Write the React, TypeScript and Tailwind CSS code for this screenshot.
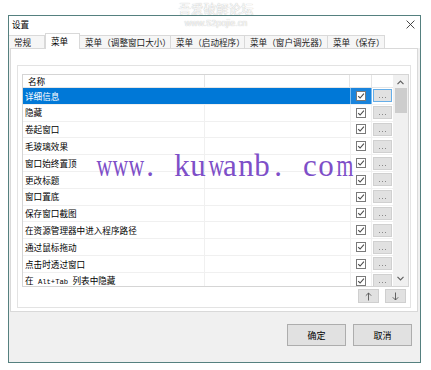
import React from 'react';

const cjk = "font-['Noto_Sans_CJK_SC',sans-serif]";

function Check() {
  return (
    <svg width="10" height="10" viewBox="0 0 10 10">
      <rect x="0.5" y="0.5" width="9" height="9" fill="#ffffff" stroke="#7a7a7a" />
      <path d="M2.2 5.1 L4.1 7 L7.9 2.7" fill="none" stroke="#4a4a4a" strokeWidth="1.1" />
    </svg>
  );
}

function Dots({ focus }: { focus?: boolean }) {
  return (
    <div
      className={
        'w-[19px] h-[13px] bg-[#e1e1e1] border flex items-center justify-center gap-[2px] pt-[4px] ' +
        (focus ? 'border-[#66aee8]' : 'border-[#d0d0d0]')
      }
    >
      <div className="w-[1px] h-[1px] bg-[#8a8a8a]" />
      <div className="w-[1px] h-[1px] bg-[#8a8a8a]" />
      <div className="w-[1px] h-[1px] bg-[#8a8a8a]" />
    </div>
  );
}

function Chevron({ up }: { up?: boolean }) {
  return (
    <svg width="7" height="5" viewBox="0 0 7 5">
      <path
        d={up ? 'M0.5 4.2 L3.5 1.2 L6.5 4.2' : 'M0.5 0.8 L3.5 3.8 L6.5 0.8'}
        fill="none"
        stroke="#606060"
        strokeWidth="1.2"
      />
    </svg>
  );
}

function Arrow({ up }: { up?: boolean }) {
  return (
    <svg width="7" height="9" viewBox="0 0 7 9">
      {up ? (
        <path d="M3.5 8.5 V1 M0.8 3.7 L3.5 1 L6.2 3.7" fill="none" stroke="#555" strokeWidth="0.9" />
      ) : (
        <path d="M3.5 0.5 V8 M0.8 5.3 L3.5 8 L6.2 5.3" fill="none" stroke="#555" strokeWidth="0.9" />
      )}
    </svg>
  );
}

const names: React.ReactNode[] = [
  '详细信息',
  '隐藏',
  '卷起窗口',
  '毛玻璃效果',
  '窗口始终置顶',
  '更改标题',
  '窗口置底',
  '保存窗口截图',
  '在资源管理器中进入程序路径',
  '通过鼠标拖动',
  '点击时透过窗口',
  <span key="alt">
    在<span className="font-['Liberation_Mono',monospace] text-[7.2px]"> Alt+Tab </span>列表中隐藏
  </span>,
];

const tabs = [
  { t: '常规', w: 'w-[36px]' },
  { t: '菜单', w: 'w-[35px]', sel: true },
  { t: '菜单（调整窗口大小）', w: 'w-[91px]' },
  { t: '菜单（启动程序）', w: 'w-[74px]' },
  { t: '菜单（窗户调光器）', w: 'w-[83px]' },
  { t: '菜单（保存）', w: 'w-[57px]' },
];

const wm = 'www. kuwanb. com'.split('');

export default function App() {
  return (
    <div className={'relative w-[431px] h-[370px] bg-white overflow-hidden ' + cjk}>
      <div className="pt-[15px] pl-[8px]">
        <div className="w-[413px] h-[348px] border border-[#55807f] bg-[#f0f0f0] flex flex-col">
          {/* title bar */}
          <div className="h-[17px] bg-white flex items-center justify-between pl-[3px] pr-[5px]">
            <span className="text-[8.6px] leading-none text-black">设置</span>
            <svg width="9" height="9" viewBox="0 0 9 9">
              <path d="M0.6 0.6 L8.4 8.4 M8.4 0.6 L0.6 8.4" stroke="#333" strokeWidth="0.9" />
            </svg>
          </div>
          {/* tabs */}
          <div className="h-[15px] bg-white flex items-end relative z-10">
            {tabs.map((tb, i) =>
              tb.sel ? (
                <div
                  key={i}
                  className={
                    tb.w +
                    ' h-[16px] -mb-[1px] bg-white border border-b-0 border-[#d9d9d9] pl-[5px] flex items-center text-[8.6px] leading-none text-black'
                  }
                >
                  {tb.t}
                </div>
              ) : (
                <div
                  key={i}
                  className={
                    tb.w +
                    ' h-[13px] bg-[#f6f6f6] border border-b-0 border-l-0 border-[#d9d9d9] pl-[5px] flex items-center text-[8.6px] leading-none text-[#222] whitespace-nowrap'
                  }
                >
                  {tb.t}
                </div>
              )
            )}
          </div>
          {/* tab panel */}
          <div className="ml-[1px] w-[408px] h-[264px] border border-[#d9d9d9] bg-white pt-[16px] pl-[6px]">
            <div className="w-[394px] h-[243px] border border-[#e3e3e3] pl-[4px] pt-[8px]">
              <div className="w-[387px] h-[213px] border border-[#d5d5d5] flex bg-white">
                <div className="w-[370px] flex flex-col overflow-hidden">
                  {/* header */}
                  <div className="h-[13px] flex border-b border-[#e5e5e5] shrink-0">
                    <div className="w-[182px] border-r border-[#e5e5e5] pl-[5px] flex items-center text-[8.6px] leading-none text-black">
                      名称
                    </div>
                    <div className="w-[145px] border-r border-[#e5e5e5]" />
                    <div className="w-[22px] border-r border-[#e5e5e5]" />
                    <div className="w-[21px]" />
                  </div>
                  {names.map((n, i) => {
                    const sel = i === 0;
                    return (
                      <div key={i} className="h-[16.8px] shrink-0 flex border-b border-[#f0f0f0]">
                        <div
                          className={
                            'w-[327px] flex ' + (sel ? 'bg-[#0078d7] text-white' : 'text-black')
                          }
                        >
                          <div
                            className={
                              'w-[182px] pl-[2px] flex items-center text-[8.6px] leading-none whitespace-nowrap border-r ' +
                              (sel ? 'border-[#0078d7]' : 'border-[#f0f0f0]')
                            }
                          >
                            {n}
                          </div>
                          <div className="w-[145px]" />
                        </div>
                        <div
                          className={
                            'w-[22px] flex items-center justify-center border-x ' +
                            (sel ? 'bg-[#1a84dc] border-[#7cbcef]' : 'border-[#f0f0f0]')
                          }
                        >
                          <Check />
                        </div>
                        <div className="w-[21px] flex items-center justify-center">
                          <Dots focus={sel} />
                        </div>
                      </div>
                    );
                  })}
                </div>
                {/* scrollbar */}
                <div className="w-[15px] bg-[#f0f0f0] flex flex-col">
                  <div className="h-[13px] flex items-center justify-center pt-[1px]">
                    <Chevron up />
                  </div>
                  <div className="mx-[1.5px] h-[25px] bg-[#cdcdcd]" />
                  <div className="flex-1" />
                  <div className="h-[15px] flex items-center justify-center">
                    <Chevron />
                  </div>
                </div>
              </div>
              <div className="mt-[2px] h-[14px] flex justify-end gap-[6px] pr-[4px]">
                <div className="w-[21px] h-[14px] bg-[#e1e1e1] border border-[#cfcfcf] flex items-center justify-center">
                  <Arrow up />
                </div>
                <div className="w-[21px] h-[14px] bg-[#e1e1e1] border border-[#cfcfcf] flex items-center justify-center">
                  <Arrow />
                </div>
              </div>
            </div>
          </div>
          {/* bottom buttons */}
          <div className="flex justify-end gap-[7px] pr-[8px] pt-[12px]">
            <div className="w-[59px] h-[22px] bg-[#e1e1e1] border border-[#adadad] flex items-center justify-center text-[9px] leading-none text-black">
              确定
            </div>
            <div className="w-[59px] h-[22px] bg-[#e1e1e1] border border-[#adadad] flex items-center justify-center text-[9px] leading-none text-black">
              取消
            </div>
          </div>
        </div>
      </div>

      {/* top watermark */}
      <div className="absolute left-[176px] top-[2px] w-[80px] flex flex-col items-center gap-[2px] text-[#fafafa] [text-shadow:0_0_1px_rgba(0,0,0,0.35)] pointer-events-none">
        <span className="text-[12.5px] leading-[14px]">吾爱破解论坛</span>
        <span className="text-[9px] leading-[10px] font-['Liberation_Sans',sans-serif]">www.52pojie.cn</span>
      </div>

      {/* purple watermark */}
      <div className="absolute left-[94px] top-[150px] flex font-['Liberation_Serif',serif] text-[31px] leading-[32px] text-[#7e4fc8] pointer-events-none">
        {wm.map((c, i) => (
          <span
            key={i}
            className={
              'inline-block w-[16px] text-center ' + (c === 'w' || c === 'm' ? 'scale-x-[0.7]' : '')
            }
          >
            {c === ' ' ? '\u00a0' : c}
          </span>
        ))}
      </div>
    </div>
  );
}
